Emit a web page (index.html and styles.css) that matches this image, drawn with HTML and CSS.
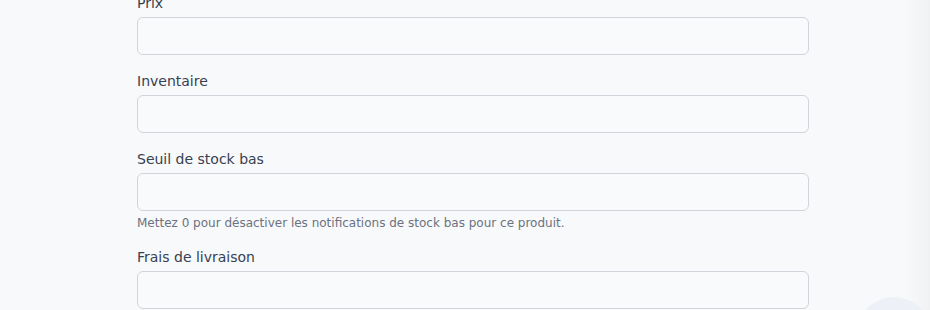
FILE: index.html
```html
<!DOCTYPE html>
<html lang="fr">
<head>
    <meta charset="UTF-8">
    <meta name="viewport" content="width=device-width, initial-scale=1.0">
    <title>Produit</title>
    <link rel="stylesheet" href="styles.css">
</head>
<body>
    <div class="page">
        <form class="product-form">
            <div class="field">
                <label for="price">Prix</label>
                <input type="text" id="price">
            </div>
            <div class="field">
                <label for="inventory">Inventaire</label>
                <input type="text" id="inventory">
            </div>
            <div class="field">
                <label for="threshold">Seuil de stock bas</label>
                <input type="text" id="threshold">
                <p class="help">Mettez 0 pour désactiver les notifications de stock bas pour ce produit.</p>
            </div>
            <div class="field">
                <label for="shipping">Frais de livraison</label>
                <input type="text" id="shipping">
            </div>
        </form>
    </div>
    <div class="edge-shade"></div>
    <div class="chat-bubble"></div>
</body>
</html>
```

FILE: styles.css
```css
html, body {
    margin: 0;
    height: 100%;
    overflow: hidden;
}
body {
    font-family: "DejaVu Sans", sans-serif;
    background: #f8f9fb;
    color: #374151;
}
.page {
    width: 672px;
    margin: 0 0 0 137px;
}
.product-form {
    margin-top: -7px;
}
.field {
    display: flex;
    flex-direction: column;
    margin-bottom: 16px;
}
.field label {
    font-size: 14px;
    line-height: 20px;
    margin-bottom: 4px;
    color: #374151;
}
.field input {
    box-sizing: border-box;
    height: 38px;
    width: 100%;
    border: 1px solid #d1d5db;
    border-radius: 6px;
    background: #f9fafb;
    padding: 8px 12px;
    font-size: 14px;
    outline: none;
}
.help {
    margin: 4px 0 0;
    font-size: 12px;
    line-height: 16px;
    color: #6b7280;
}
.edge-shade {
    position: fixed;
    top: 0;
    right: 0;
    width: 24px;
    height: 100%;
    background: linear-gradient(to right, rgba(240, 241, 243, 0), #f0f1f3);
}
.chat-bubble {
    position: fixed;
    left: 856px;
    top: 297px;
    width: 76px;
    height: 76px;
    border-radius: 50%;
    background: #eef0f7;
}
```
